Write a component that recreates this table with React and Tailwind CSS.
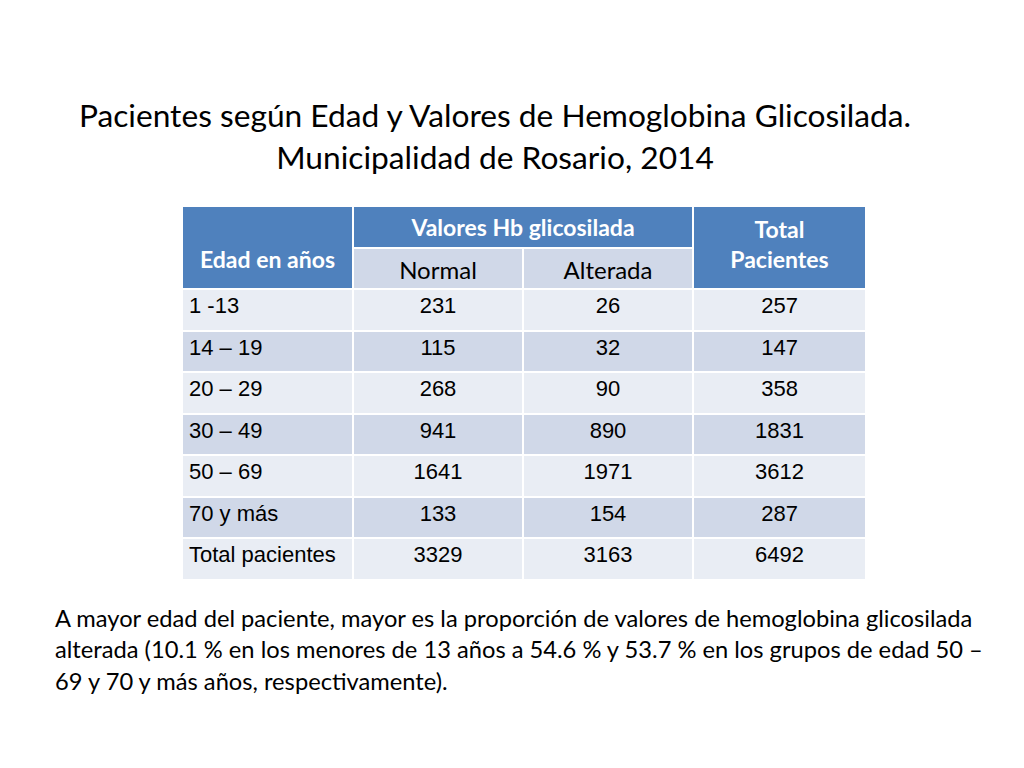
import React from 'react';

const rows = [
  ['1 -13', '231', '26', '257'],
  ['14 – 19', '115', '32', '147'],
  ['20 – 29', '268', '90', '358'],
  ['30 – 49', '941', '890', '1831'],
  ['50 – 69', '1641', '1971', '3612'],
  ['70 y más', '133', '154', '287'],
  ['Total pacientes', '3329', '3163', '6492'],
];

const App = () => {
  return (
    <div className="w-[1024px] h-[768px] bg-white text-black overflow-hidden" style={{ fontFamily: 'Lato, "Open Sans", sans-serif' }}>
      <h1 className="pt-[94px] w-[990px] text-center text-[31.7px] leading-[42px] font-normal">
        Pacientes según Edad y Valores de Hemoglobina Glicosilada.
        <br />
        Municipalidad de Rosario, 2014
      </h1>

      <table className="mt-[27px] ml-[181px] w-[684px] table-fixed border-collapse text-[22px] leading-[25px] font-['Liberation_Sans',Arial,sans-serif]">
        <colgroup>
          <col className="w-[171px]" />
          <col className="w-[170px]" />
          <col className="w-[170px]" />
          <col className="w-[173px]" />
        </colgroup>
        <thead className="font-['Lato','Open_Sans',sans-serif]">
          <tr className="h-[42px]">
            <th rowSpan={2} className="bg-[#4f81bd] text-white border-2 border-white align-middle pt-[24px] text-[23px] font-bold">
              Edad en años
            </th>
            <th colSpan={2} className="bg-[#4f81bd] text-white border-2 border-white text-[23px] font-bold pt-[1px]">
              Valores Hb glicosilada
            </th>
            <th rowSpan={2} className="bg-[#4f81bd] text-white border-2 border-white text-[23px] leading-[30px] font-bold pb-[8px]">
              Total
              <br />
              Pacientes
            </th>
          </tr>
          <tr className="h-[41px]">
            <th className="bg-[#d0d8e8] border-2 border-white text-[24px] font-normal pt-[2px]">Normal</th>
            <th className="bg-[#d0d8e8] border-2 border-white text-[24px] font-normal pt-[2px]">Alterada</th>
          </tr>
        </thead>
        <tbody>
          {rows.map((r, i) => (
            <tr key={r[0]} className={`h-[41.5px] ${i % 2 === 0 ? 'bg-[#e9edf4]' : 'bg-[#d0d8e8]'}`}>
              <td className="border-2 border-white align-top pt-[3px] pl-[6px] whitespace-nowrap">{r[0]}</td>
              <td className="border-2 border-white align-top pt-[3px] text-center">{r[1]}</td>
              <td className="border-2 border-white align-top pt-[3px] text-center">{r[2]}</td>
              <td className="border-2 border-white align-top pt-[3px] text-center">{r[3]}</td>
            </tr>
          ))}
        </tbody>
      </table>

      <p className="mt-[22px] ml-[55px] text-[23.7px] leading-[31.5px] whitespace-nowrap">
        A mayor edad del paciente, mayor es la proporción de valores de hemoglobina glicosilada
        <br />
        alterada (10.1 % en los menores de 13 años a 54.6 % y 53.7 % en los grupos de edad 50 –
        <br />
        69 y 70 y más años, respectivamente).
      </p>
    </div>
  );
};

export default App;
